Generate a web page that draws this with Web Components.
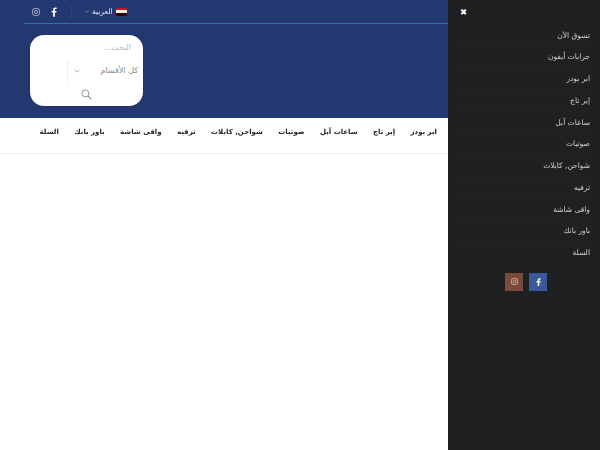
<!DOCTYPE html>
<html lang="ar">
<head>
<meta charset="utf-8">
<title>متجر</title>
<style>
    html, body { margin: 0; height: 100%; overflow: hidden; background: #fff; }
    body { font-family: "DejaVu Sans", "Noto Sans", sans-serif; }
    page-shell { height: 450px; }
</style>
</head>
<body>
<page-shell>
    <site-header></site-header>
    <main-nav></main-nav>
    <side-menu slot="side"></side-menu>
</page-shell>

<script>
const ICONS = {
    facebook: `<svg viewBox="0 0 10 16" width="100%" height="100%"><path fill="currentColor" d="M6.4 16V9h2.4l.4-2.8H6.4V4.5c0-.8.3-1.4 1.4-1.4h1.5V.6C9 .5 8.2.4 7.2.4 5 .4 3.5 1.7 3.5 4.2v2H1V9h2.5v7z"/></svg>`,
    instagram: `<svg viewBox="0 0 16 16" width="100%" height="100%" fill="none" stroke="currentColor" stroke-width="1.5"><rect x="1.2" y="1.2" width="13.6" height="13.6" rx="3.6"/><circle cx="8" cy="8" r="3.2"/><circle cx="11.9" cy="4.1" r=".5" fill="currentColor" stroke-width=".6"/></svg>`,
    chevron: `<svg viewBox="0 0 10 6" width="100%" height="100%" fill="none" stroke="currentColor" stroke-width="1.2"><path d="M1 1l4 4 4-4"/></svg>`,
    search: `<svg viewBox="0 0 12 12" width="100%" height="100%" fill="none" stroke="currentColor" stroke-width="1"><circle cx="4.8" cy="4.8" r="3.8"/><path d="M7.6 7.6l3.8 3.8" stroke-width="1.2"/></svg>`
};

class PageShell extends HTMLElement {
    constructor() {
        super();
        const shadowRoot = this.attachShadow({mode: 'open'});
        shadowRoot.innerHTML = `
            <style>
                :host { display: flex; width: 600px; }
                .main { width: 448px; flex: none; }
                .side { width: 152px; flex: none; }
            </style>
            <div class="main"><slot></slot></div>
            <div class="side"><slot name="side"></slot></div>
        `;
    }
}

class SiteHeader extends HTMLElement {
    constructor() {
        super();
        const shadowRoot = this.attachShadow({mode: 'open'});
        shadowRoot.innerHTML = `
            <style>
                :host { display: block; height: 118px; background: #233871; }
                svg { display: block; }
                .top {
                    display: flex;
                    align-items: center;
                    height: 23px;
                    margin-left: 24px;
                    padding-left: 8px;
                    border-bottom: 1px solid #2077ad;
                    will-change: transform;
                }
                .ico { display: block; flex: none; }
                .insta { width: 8px; height: 8px; color: #c3c9d8; }
                .fb { width: 6px; height: 10px; margin-left: 11px; color: #fff; }
                .sep { width: 1px; height: 14px; margin-left: 14px; background: #2f4479; }
                .chev { width: 4px; height: 3px; margin-left: 13px; color: #ccd2e0; }
                .lang { margin-left: 3px; font-size: 7.5px; line-height: 12px; color: #e6e9f1; }
                .flag { width: 11px; height: 8px; margin-left: 3px; display: flex; flex-direction: column; border-radius: 1px; overflow: hidden; }
                .flag i { flex: 1; }
                .search {
                    width: 113px;
                    height: 71px;
                    margin: 11px 0 0 30px;
                    box-sizing: border-box;
                    background: #fff;
                    border-radius: 14px;
                    display: flex;
                    flex-direction: column;
                    box-shadow: 0 0 2px rgba(0,0,0,.2);
                }
                .q {
                    height: 24px;
                    padding: 0 12px 0 0;
                    direction: rtl;
                    font-size: 8px;
                    line-height: 25px;
                    color: #b9b9b9;
                }
                .cat { display: flex; align-items: center; height: 23px; }
                .cat .line { width: 1px; height: 23px; margin-left: 37px; background: #ececec; }
                .cat .down { width: 6px; height: 4px; margin-left: 6px; color: #8d8d8d; }
                .cat .label { margin-left: auto; padding-right: 5px; font-size: 8px; color: #8a8a8a; }
                .go { flex: 1; display: flex; align-items: center; justify-content: center; color: #8b8b8b; }
                .go span { width: 11px; height: 11px; display: block; }
            </style>
            <div class="top">
                <span class="ico insta">${ICONS.instagram}</span>
                <span class="ico fb">${ICONS.facebook}</span>
                <span class="sep"></span>
                <span class="ico chev">${ICONS.chevron}</span>
                <span class="lang">العربية</span>
                <span class="flag"><i style="background:#ce1126"></i><i style="background:#f4eee0"></i><i style="background:#111"></i></span>
            </div>
            <div class="search">
                <div class="q">البحث...</div>
                <div class="cat">
                    <span class="line"></span>
                    <span class="ico down">${ICONS.chevron}</span>
                    <span class="label">كل الأقسام</span>
                </div>
                <div class="go"><span>${ICONS.search}</span></div>
            </div>
        `;
    }
}

class MainNav extends HTMLElement {
    constructor() {
        super();
        const shadowRoot = this.attachShadow({mode: 'open'});
        const items = ['ابر بودز', 'إير تاج', 'ساعات آبل', 'صوتيات', 'شواحن, كابلات', 'ترفيه', 'واقى شاشة', 'باور بانك', 'السلة'];
        shadowRoot.innerHTML = `
            <style>
                :host { display: block; height: 36px; box-sizing: border-box; background: #fff; border-bottom: 1px solid #eeeeee; }
                ul {
                    display: flex;
                    gap: 15.4px;
                    direction: rtl;
                    margin: 0;
                    padding: 8px 11px 0 0;
                    list-style: none;
                    font-size: 7px;
                    font-weight: 700;
                    line-height: 12px;
                    color: #222;
                    white-space: nowrap;
                    will-change: transform;
                }
            </style>
            <ul>${items.map(t => `<li>${t}</li>`).join('')}</ul>
        `;
    }
}

class SideMenu extends HTMLElement {
    constructor() {
        super();
        const shadowRoot = this.attachShadow({mode: 'open'});
        const items = ['تسوق الآن', 'جرابات أيفون', 'ابر بودز', 'إير تاج', 'ساعات آبل', 'صوتيات', 'شواحن, كابلات', 'ترفيه', 'واقى شاشة', 'باور بانك', 'السلة'];
        shadowRoot.innerHTML = `
            <style>
                :host { display: block; height: 450px; background: #1f2022; }
                svg { display: block; }
                .close { padding: 7px 0 0 12px; height: 16px; color: #fff; font-size: 8.5px; line-height: 10px; font-weight: 700; }
                ul { margin: 0; padding: 1.5px 10px 0; list-style: none; direction: rtl; font-size: 7.5px; color: #cfcfcf; will-change: transform; }
                li { height: 21.75px; line-height: 21px; box-sizing: border-box; border-bottom: 1px solid #232426; white-space: nowrap; }
                li:last-child { border-bottom: 0; }
                .social { display: flex; gap: 6px; margin: 9px 0 0 57px; }
                .social a { width: 18px; height: 18px; display: flex; align-items: center; justify-content: center; color: #fff; }
                .social a span { display: block; }
                .ig { background: #7b4a3d; color: #d9cbc6 !important; }
                .ig span { width: 7px; height: 7px; }
                .f { background: #3b5998; }
                .f span { width: 5px; height: 8px; }
            </style>
            <div class="close">✖</div>
            <ul>${items.map(t => `<li>${t}</li>`).join('')}</ul>
            <div class="social">
                <a class="ig"><span>${ICONS.instagram}</span></a>
                <a class="f"><span>${ICONS.facebook}</span></a>
            </div>
        `;
    }
}

window.customElements.define('page-shell', PageShell);
window.customElements.define('site-header', SiteHeader);
window.customElements.define('main-nav', MainNav);
window.customElements.define('side-menu', SideMenu);
</script>
</body>
</html>
